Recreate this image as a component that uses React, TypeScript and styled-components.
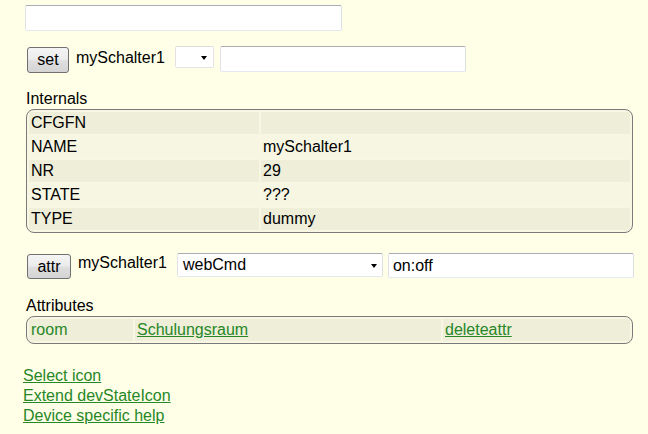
import React from 'react';
import styled, { createGlobalStyle } from 'styled-components';

const Global = createGlobalStyle`
  html, body { margin: 0; padding: 0; background: #FFFFE7; }
  body {
    font-family: "Liberation Sans", Arial, sans-serif;
    font-size: 16px;
    color: #000;
  }
`;

const Page = styled.div`
  display: flex;
  flex-direction: column;
  align-items: flex-start;
  width: 648px;
  min-height: 434px;
  box-sizing: border-box;
`;

const Block = styled.div<{ $top: number; $left: number }>`
  margin-top: ${(p) => p.$top}px;
  margin-left: ${(p) => p.$left}px;
`;

const Row = styled.div<{ $top: number; $left: number }>`
  display: flex;
  align-items: flex-start;
  margin-top: ${(p) => p.$top}px;
  margin-left: ${(p) => p.$left}px;
`;

const TextInput = styled.input<{ $w: number; $h: number; $ml?: number }>`
  box-sizing: border-box;
  width: ${(p) => p.$w}px;
  height: ${(p) => p.$h}px;
  margin: 0 0 0 ${(p) => p.$ml ?? 0}px;
  padding: 0 4px;
  border: 1px solid;
  border-color: #abadb3 #dbdfe6 #e3e9ef #e2e3ea;
  border-radius: 2px;
  background: #fff;
  font-family: "Liberation Sans", Arial, sans-serif;
  font-size: 16px;
  color: #000;
  outline: none;
`;

const Button = styled.button<{ $w: number; $h: number; $mt: number }>`
  box-sizing: border-box;
  width: ${(p) => p.$w}px;
  height: ${(p) => p.$h}px;
  margin: ${(p) => p.$mt}px 0 0 0;
  padding: 0;
  border: 1px solid #707070;
  border-radius: 3px;
  background: linear-gradient(#f4f4f4, #ececec 45%, #dedede 55%, #d4d4d4);
  font-family: "Liberation Sans", Arial, sans-serif;
  font-size: 16px;
  color: #000;
  line-height: 18px;
`;

const DevName = styled.span<{ $mt: number; $ml: number }>`
  margin: ${(p) => p.$mt}px 0 0 ${(p) => p.$ml}px;
  line-height: 18px;
  white-space: nowrap;
`;

const SelectBox = styled.div<{ $w: number; $h: number; $ml: number; $pr: number; $border: string }>`
  box-sizing: border-box;
  display: flex;
  align-items: center;
  justify-content: space-between;
  width: ${(p) => p.$w}px;
  height: ${(p) => p.$h}px;
  margin-left: ${(p) => p.$ml}px;
  padding: 0 ${(p) => p.$pr}px 0 5px;
  border: 1px solid;
  border-color: ${(p) => p.$border};
  border-radius: 2px;
  background: #fff;
  line-height: 18px;
`;

const Arrow = styled.span`
  width: 0;
  height: 0;
  border-left: 3.5px solid transparent;
  border-right: 3.5px solid transparent;
  border-top: 4px solid #000;
  margin-top: 1px;
`;

const Label = styled.div<{ $top: number }>`
  margin-top: ${(p) => p.$top}px;
  margin-left: 26px;
  line-height: 18px;
`;

const Table = styled.table<{ $top: number }>`
  margin-top: ${(p) => p.$top}px;
  margin-left: 26px;
  width: 607px;
  table-layout: fixed;
  border: 1px solid #7a7a7a;
  border-radius: 8px;
  border-collapse: separate;
  border-spacing: 2px;
  background: #F7F7E4;
`;

const Tr = styled.tr<{ $odd: boolean }>`
  background: ${(p) => (p.$odd ? '#EEEED9' : '#F6F6E3')};
`;

const Td = styled.td<{ $w?: number }>`
  box-sizing: border-box;
  ${(p) => (p.$w ? `width: ${p.$w}px;` : '')}
  height: 22px;
  padding: 2px;
  line-height: 18px;
  white-space: nowrap;
  overflow: hidden;
  font-size: 16px;
`;

const GreenText = styled.span`
  color: #278727;
`;

const Link = styled.a`
  color: #278727;
  text-decoration: underline;
  cursor: pointer;
`;

const LinkList = styled.div`
  display: flex;
  flex-direction: column;
  align-items: flex-start;
  margin-top: 22px;
  margin-left: 23px;
  line-height: 20px;
`;

const internals: [string, string][] = [
  ['CFGFN', ''],
  ['NAME', 'mySchalter1'],
  ['NR', '29'],
  ['STATE', '???'],
  ['TYPE', 'dummy'],
];

export default function App() {
  return (
    <>
      <Global />
      <Page>
        <Block $top={5} $left={25}>
          <TextInput $w={317} $h={26} defaultValue="" />
        </Block>

        <Row $top={15} $left={27}>
          <Button $w={42} $h={26} $mt={1}>set</Button>
          <DevName $mt={3} $ml={7}>mySchalter1</DevName>
          <SelectBox $w={39} $h={22} $ml={10} $pr={6} $border="#dcdcdc #e3e3e3 #e3e3e3 #e3e3e3">
            <span />
            <Arrow />
          </SelectBox>
          <TextInput $w={246} $h={26} $ml={6} defaultValue="" />
        </Row>

        <Label $top={17}>Internals</Label>
        <Table $top={1}>
          <tbody>
            {internals.map(([k, v], i) => (
              <Tr key={k} $odd={i % 2 === 0}>
                <Td $w={230}>{k}</Td>
                <Td>{v}</Td>
              </Tr>
            ))}
          </tbody>
        </Table>

        <Row $top={20} $left={27}>
          <Button $w={44} $h={25} $mt={1}>attr</Button>
          <DevName $mt={1} $ml={7}>mySchalter1</DevName>
          <SelectBox $w={206} $h={24} $ml={10} $pr={5} $border="#abadb3 #dbdfe6 #e3e9ef #e2e3ea">
            <span>webCmd</span>
            <Arrow />
          </SelectBox>
          <TextInput $w={246} $h={25} $ml={5} defaultValue="on:off" />
        </Row>

        <Label $top={18}>Attributes</Label>
        <Table $top={1}>
          <tbody>
            <Tr $odd={true}>
              <Td $w={104}><GreenText>room</GreenText></Td>
              <Td $w={306}><Link>Schulungsraum</Link></Td>
              <Td><Link>deleteattr</Link></Td>
            </Tr>
          </tbody>
        </Table>

        <LinkList>
          <Link>Select icon</Link>
          <Link>Extend devStateIcon</Link>
          <Link>Device specific help</Link>
        </LinkList>
      </Page>
    </>
  );
}
